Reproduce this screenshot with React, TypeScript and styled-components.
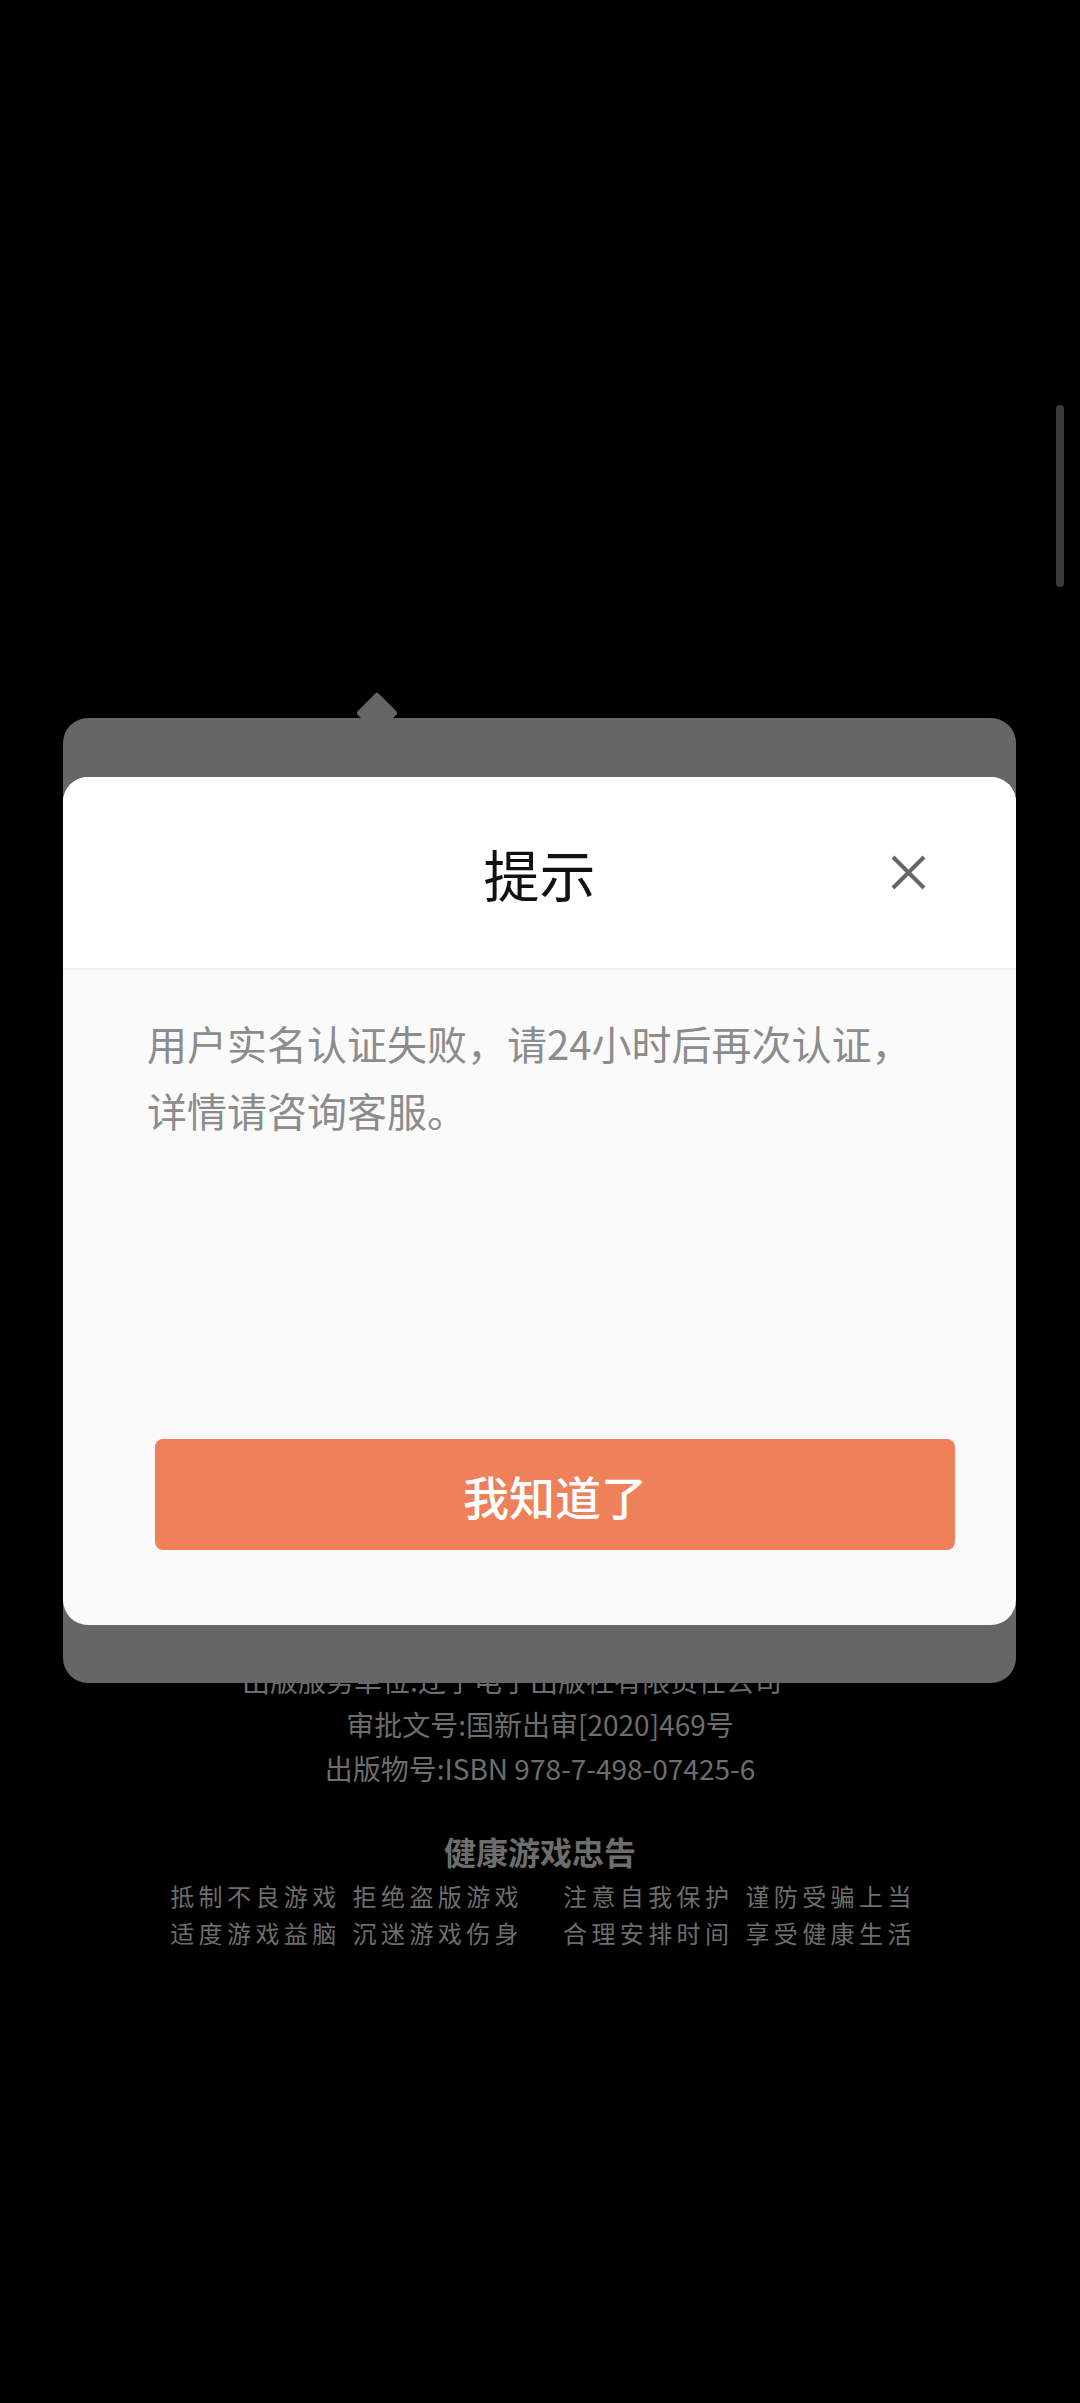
import React from "react";
import styled, { createGlobalStyle } from "styled-components";

const GlobalStyle = createGlobalStyle`
  html, body {
    margin: 0;
    padding: 0;
    background: #000;
  }
  body {
    font-family: "Noto Sans CJK SC", "Noto Sans", sans-serif;
  }
`;

const Page = styled.div`
  position: relative;
  width: 1080px;
  height: 2403px;
  background: #000;
  overflow: hidden;
`;

const ScrollThumb = styled.div`
  position: absolute;
  top: 405px;
  right: 16px;
  width: 8px;
  height: 182px;
  border-radius: 4px;
  background: #3b3b3b;
`;

const Footer = styled.div`
  display: flex;
  flex-direction: column;
  align-items: center;
  padding-top: 1658px;
  color: #6d6d6d;
`;

const InfoLine = styled.div<{ $shift?: number }>`
  font-size: 28px;
  line-height: 44px;
  white-space: nowrap;
  padding-right: ${(p) => (p.$shift ? `${p.$shift}px` : "0")};
`;

const AdviceTitle = styled.div`
  margin-top: 39px;
  font-size: 32px;
  line-height: 44px;
  font-weight: 700;
`;

const AdviceGrid = styled.div`
  margin-top: 4px;
  display: grid;
  grid-template-columns: auto auto;
  column-gap: 40px;
  padding-left: 6px;
`;

const AdviceLine = styled.div`
  display: flex;
  gap: 12px;
  font-size: 24px;
  line-height: 37px;
  letter-spacing: 4.4px;
  white-space: nowrap;
`;

const Popover = styled.div`
  position: absolute;
  top: 718px;
  left: 63px;
  width: 953px;
  height: 965px;
  border-radius: 25px;
  background: #666;
`;

const Arrow = styled.div`
  position: absolute;
  top: -20px;
  left: 299px;
  width: 30px;
  height: 30px;
  border-radius: 3px;
  background: #666;
  transform: rotate(45deg);
`;

const Dialog = styled.div`
  position: absolute;
  top: 777px;
  left: 63px;
  width: 953px;
  height: 848px;
  border-radius: 25px;
  overflow: hidden;
  display: flex;
  flex-direction: column;
  background: #fafafa;
`;

const Header = styled.div`
  height: 191px;
  flex-shrink: 0;
  display: grid;
  grid-template-columns: 1fr auto 1fr;
  align-items: center;
  padding: 0 90px;
  background: #fff;
  border-bottom: 2px solid #f0f0f0;
`;

const Title = styled.div`
  grid-column: 2;
  font-size: 56px;
  line-height: 1;
  color: #111;
`;

const CloseButton = styled.button`
  grid-column: 3;
  justify-self: end;
  width: 35px;
  height: 35px;
  padding: 0;
  border: none;
  background: none;
  cursor: pointer;
  display: flex;
`;

const Body = styled.div`
  flex: 1;
  display: flex;
  flex-direction: column;
  padding: 40px 84px 75px;
`;

const Message = styled.p`
  margin: 0;
  font-size: 40px;
  line-height: 67px;
  color: #8c8c8c;
`;

const ConfirmButton = styled.button`
  margin-top: auto;
  margin-left: 8px;
  width: 800px;
  height: 111px;
  border: none;
  border-radius: 8px;
  background: #ee805a;
  color: #fff;
  font-family: "Noto Sans CJK SC", sans-serif;
  font-size: 46px;
  font-weight: 500;
  cursor: pointer;
`;

const advice = [
  ["抵制不良游戏", "拒绝盗版游戏"],
  ["注意自我保护", "谨防受骗上当"],
  ["适度游戏益脑", "沉迷游戏伤身"],
  ["合理安排时间", "享受健康生活"],
];

const App: React.FC = () => {
  return (
    <Page>
      <GlobalStyle />
      <ScrollThumb />

      <Footer>
        <InfoLine $shift={56}>出版服务单位:辽宁电子出版社有限责任公司</InfoLine>
        <InfoLine>审批文号:国新出审[2020]469号</InfoLine>
        <InfoLine>出版物号:ISBN 978-7-498-07425-6</InfoLine>
        <AdviceTitle>健康游戏忠告</AdviceTitle>
        <AdviceGrid>
          {advice.map((pair) => (
            <AdviceLine key={pair[0]}>
              <span>{pair[0]}</span>
              <span>{pair[1]}</span>
            </AdviceLine>
          ))}
        </AdviceGrid>
      </Footer>

      <Popover>
        <Arrow />
      </Popover>

      <Dialog>
        <Header>
          <Title>提示</Title>
          <CloseButton aria-label="关闭">
            <svg width="35" height="35" viewBox="0 0 35 35">
              <path
                d="M2 2 L33 33 M33 2 L2 33"
                stroke="#666"
                strokeWidth="4"
                strokeLinecap="butt"
              />
            </svg>
          </CloseButton>
        </Header>
        <Body>
          <Message>用户实名认证失败，请24小时后再次认证，详情请咨询客服。</Message>
          <ConfirmButton>我知道了</ConfirmButton>
        </Body>
      </Dialog>
    </Page>
  );
};

export default App;
